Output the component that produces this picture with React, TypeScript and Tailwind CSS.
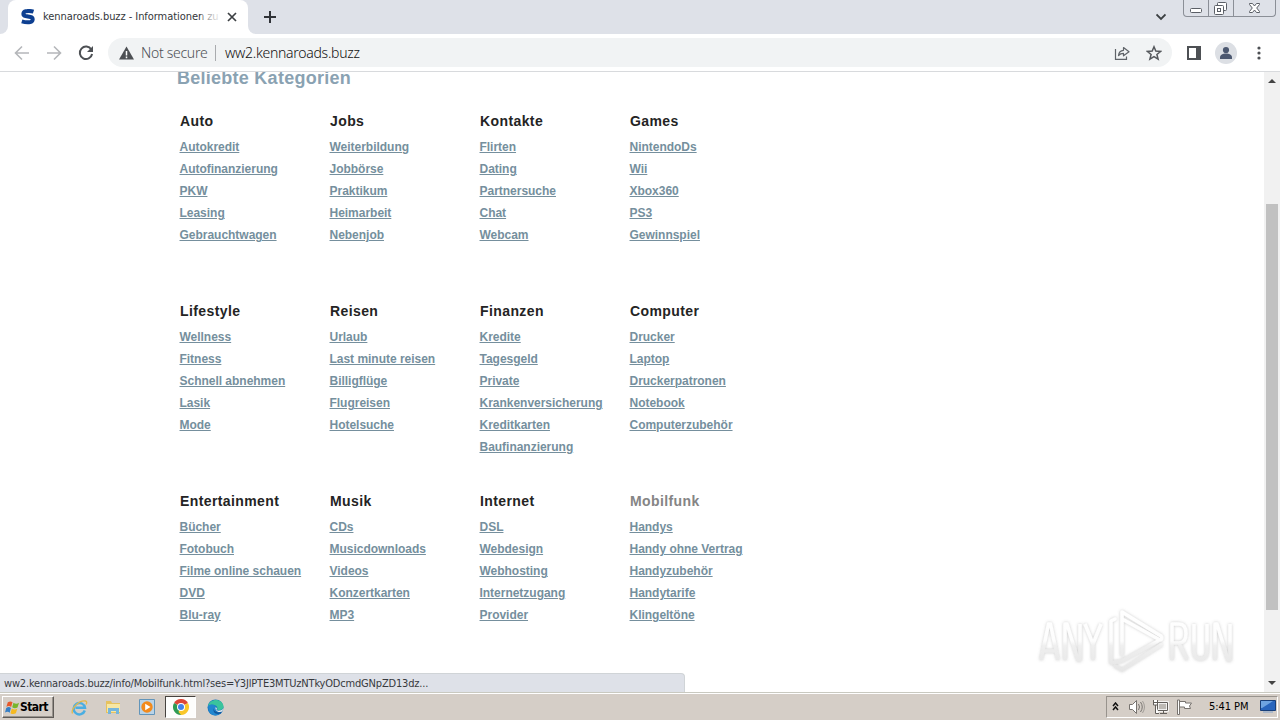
import React from "react";

type Category = { title: string; links: string[]; muted?: boolean };

const rows: Category[][] = [
  [
    { title: "Auto", links: ["Autokredit", "Autofinanzierung", "PKW", "Leasing", "Gebrauchtwagen"] },
    { title: "Jobs", links: ["Weiterbildung", "Jobbörse", "Praktikum", "Heimarbeit", "Nebenjob"] },
    { title: "Kontakte", links: ["Flirten", "Dating", "Partnersuche", "Chat", "Webcam"] },
    { title: "Games", links: ["NintendoDs", "Wii", "Xbox360", "PS3", "Gewinnspiel"] },
  ],
  [
    { title: "Lifestyle", links: ["Wellness", "Fitness", "Schnell abnehmen", "Lasik", "Mode"] },
    { title: "Reisen", links: ["Urlaub", "Last minute reisen", "Billigflüge", "Flugreisen", "Hotelsuche"] },
    { title: "Finanzen", links: ["Kredite", "Tagesgeld", "Private", "Krankenversicherung", "Kreditkarten", "Baufinanzierung"] },
    { title: "Computer", links: ["Drucker", "Laptop", "Druckerpatronen", "Notebook", "Computerzubehör"] },
  ],
  [
    { title: "Entertainment", links: ["Bücher", "Fotobuch", "Filme online schauen", "DVD", "Blu-ray"] },
    { title: "Musik", links: ["CDs", "Musicdownloads", "Videos", "Konzertkarten", "MP3"] },
    { title: "Internet", links: ["DSL", "Webdesign", "Webhosting", "Internetzugang", "Provider"] },
    { title: "Mobilfunk", muted: true, links: ["Handys", "Handy ohne Vertrag", "Handyzubehör", "Handytarife", "Klingeltöne"] },
  ],
];

function TabStrip() {
  return (
    <div className="flex h-[34px] bg-[#dee1e8]">
      <div className="flex w-[8px] items-end bg-white">
        <div className="h-full w-full rounded-br-lg bg-[#dee1e8]" />
      </div>
      <div className="flex w-[240px] items-center rounded-t-lg bg-white pl-[12px]">
        <svg width="16" height="16" viewBox="0 0 16 16" fill="none" stroke="#0d3f91" strokeWidth="4">
          <path d="M13.500 2.700C11 1.900 8 1.800 5.800 2.300 2.800 3 2.500 6.300 5.500 7l5 1c3.200.8 2.700 4.500-.3 5.100-2.800.5-5.600.1-8.400-.7" />
        </svg>
        <div className="relative ml-[7px] w-[176px] whitespace-nowrap text-[11px] tracking-[-0.060px] text-[#33363a]">
          kennaroads.buzz - Informationen zu
          <div className="absolute inset-y-0 right-0 w-[18px] bg-linear-to-r from-white/30 to-white/90" />
        </div>
        <svg className="ml-[8px]" width="10" height="10" viewBox="0 0 10 10" stroke="#3c4043" strokeWidth="1.7">
          <path d="M1 1l8 8M9 1l-8 8" />
        </svg>
      </div>
      <div className="w-[8px] bg-white">
        <div className="h-full w-full rounded-bl-lg bg-[#dee1e8]" />
      </div>
      <svg className="mt-[11px] ml-[8px]" width="12" height="12" viewBox="0 0 12 12" stroke="#303338" strokeWidth="2">
        <path d="M6 0v12M0 6h12" />
      </svg>
      <svg className="mt-[13px] ml-auto" width="10" height="8" viewBox="0 0 10 8" fill="none" stroke="#3c4043" strokeWidth="1.800">
        <path d="M.5 1.500l4.500 4.500 4.500-4.500" />
      </svg>
      <div className="mr-[4px] ml-[17px] flex h-[17px] w-[93px] rounded-b-[4px] border border-t-0 border-[#8b8f97] text-[#5b5f66]">
        <div className="w-[25px] border-r border-[#8b8f97]">
          <svg width="24" height="16" fill="none" stroke="currentColor">
            <rect x="6.500" y="8.500" width="11" height="4" rx="1" fill="#fff" />
          </svg>
        </div>
        <div className="w-[25px] border-r border-[#8b8f97]">
          <svg width="24" height="16" fill="none" stroke="currentColor">
            <rect x="8.500" y="2.500" width="9" height="8" rx="1" fill="#fff" />
            <rect x="5.500" y="5.500" width="9" height="9" rx="1" fill="#fff" />
            <rect x="8.500" y="8.500" width="3" height="3" />
          </svg>
        </div>
        <svg width="41" height="16" fill="#fff" stroke="currentColor">
          <path d="M15.500 3.500h3l2 2.500 2-2.500h3v1l-2.800 3.500 2.800 3.500v1h-3l-2-2.500-2 2.500h-3v-1l2.800-3.500-2.800-3.500z" />
        </svg>
      </div>
    </div>
  );
}

function Toolbar() {
  return (
    <div className="flex h-[38px] items-center border-b border-[#d8dadd] bg-white pl-[14px]">
      <svg width="16" height="16" viewBox="0 0 16 16" fill="none" stroke="#b5b7ba" strokeWidth="1.6">
        <path d="M15 8H2M8 1.500L1.500 8 8 14.500" />
      </svg>
      <svg className="ml-[16px]" width="16" height="16" viewBox="0 0 16 16" fill="none" stroke="#b5b7ba" strokeWidth="1.6">
        <path d="M1 8h13M8 1.500L14.500 8 8 14.500" />
      </svg>
      <svg className="ml-[16px]" width="16" height="16" viewBox="0 0 16 16" fill="none" stroke="#4d5054" strokeWidth="2">
        <path d="M13.300 4.500A6.200 6.200 0 1 0 14.100 9" />
        <path d="M15 1v6H9z" fill="#4d5054" stroke="none" />
      </svg>
      <div className="ml-[14px] flex h-[29px] w-[1064px] items-center rounded-full bg-[#f1f3f4] pl-[11px]">
        <svg width="15" height="14" viewBox="0 0 15 14">
          <path d="M7.500 0.500L15 13.500H0z" fill="#4d5054" />
          <path d="M7.500 5v4.500M7.500 10.500v1.700" stroke="#fff" strokeWidth="1.500" />
        </svg>
        <span className="ml-[7px] w-[67px] whitespace-nowrap font-['Noto_Sans',sans-serif] text-[14px] font-light tracking-[-0.280px] text-[#4d5054]">Not secure</span>
        <span className="ml-[7px] h-[16px] w-px bg-[#a9abae]" />
        <span className="ml-[9px] whitespace-nowrap font-['Noto_Sans',sans-serif] text-[14px] font-light tracking-[-0.280px] text-[#111]">ww2.kennaroads.buzz</span>
        <svg className="ml-auto" width="16" height="16" viewBox="0 0 16 16" fill="none" stroke="#5f6368" strokeWidth="1.200">
          <path d="M1.500 4v10.300h11V11.500" />
          <path d="M4.500 10.500c.4-3.500 2-5 5-5.200V2.500L15 6.800l-5.500 4V8.400c-2.200 0-3.700.6-5 2.100z" strokeLinejoin="round" />
        </svg>
        <svg className="mr-[10px] ml-[16px]" width="16" height="16" viewBox="0 0 16 16" fill="none" stroke="#55585c" strokeWidth="1.500">
          <path d="M8 1.800l1.800 4.300 4.700.4-3.600 3 1.200 4.600L8 11.600l-4.100 2.500 1.200-4.600-3.600-3 4.700-.4z" />
        </svg>
      </div>
      <svg className="ml-[15px]" width="14" height="14" viewBox="0 0 14 14">
        <path d="M0 0h14v14H0zM2 2v10h7V2z" fill="#4d5054" fillRule="evenodd" />
      </svg>
      <svg className="ml-[14px]" width="22" height="22" viewBox="0 0 22 22">
        <circle cx="11" cy="11" r="11" fill="#dcdfe4" />
        <circle cx="11" cy="8" r="3.100" fill="#4c5870" />
        <path d="M5 17v-1.500c0-2.600 3-4 6-4s6 1.400 6 4V17z" fill="#4c5870" />
      </svg>
      <svg className="ml-[20px]" width="4" height="14" fill="#4d5054">
        <circle cx="2" cy="2" r="1.600" /><circle cx="2" cy="7" r="1.600" /><circle cx="2" cy="12" r="1.600" />
      </svg>
    </div>
  );
}

function CategoryBlock({ title, links, muted }: Category) {
  return (
    <section className="h-[190px] w-[150px]">
      <h3 className={`h-[25px] pl-[1px] text-[14px] leading-[20px] font-bold tracking-[0.400px] ${muted ? "text-[#858585]" : "text-[#242424]"}`}>{title}</h3>
      <ul>
        {links.map((link) => (
          <li key={link} className="h-[22px] pl-[0.500px] text-[12px] leading-[22px] font-bold tracking-[-0.020px] whitespace-nowrap text-[#758f9d]">
            <a className="underline decoration-1 underline-offset-[1px]">{link}</a>
          </li>
        ))}
      </ul>
    </section>
  );
}

function Watermark() {
  return (
    <svg className="absolute top-[535px] left-[1032px]" width="208" height="70" viewBox="0 0 208 70">
      <defs>
        <linearGradient id="fade" gradientUnits="userSpaceOnUse" x1="0" y1="4" x2="0" y2="64">
          <stop offset="0" stopColor="#ffffff" /><stop offset=".5" stopColor="#fdfdfd" /><stop offset=".58" stopColor="#efefef" /><stop offset="1" stopColor="#e6e6e6" />
        </linearGradient>
        <filter id="halo" x="-10%" y="-20%" width="120%" height="140%">
          <feDropShadow dx="0" dy="0" stdDeviation="1.700" floodColor="#777" floodOpacity=".4" />
        </filter>
      </defs>
      <g filter="url(#halo)" fill="none" stroke="url(#fade)" strokeWidth="3.500" strokeLinejoin="round">
        <path d="M9 53L16.500 17h2L26 53M11.500 44h12" />
        <path d="M33 53V17h2l11 36h2V17" />
        <path d="M53 17l8 20v16M69 17l-8 20" />
        <path d="M140 53V17h7q7 0 7 9.500t-7 9.500h-7M147 36l8 17" />
        <path d="M162 17v27q0 8 6.500 8t6.500-8V17" />
        <path d="M183 53V17h2l11 36h2V17" />
        <path d="M83 12l-4 2v42M90 48V5l39 24q2 3-1 4L92 13M79 56l11-2 36-20M83 59l7 4 39-25" strokeLinecap="round" />
      </g>
    </svg>
  );
}

function Scrollbar() {
  return (
    <div className="ml-auto flex w-[16px] flex-col items-center bg-[#f1f1f1]">
      <svg className="mt-[7px]" width="8" height="4"><path d="M0 4h8L4 0z" fill="#444" /></svg>
      <div className="mt-[121px] h-[406px] w-[12px] bg-[#c1c1c1]" />
      <svg className="mt-auto mb-[7px]" width="8" height="4"><path d="M0 0h8L4 4z" fill="#444" /></svg>
    </div>
  );
}

function Taskbar() {
  return (
    <div className="flex h-[28px] items-center border-t border-[#c9c9c0] bg-[#d5cec7] pt-[1px] shadow-[inset_0_1px_0_#fff]">
      <div className="ml-[2px] flex h-[22px] w-[52px] items-center border border-t-white border-r-[#5e5a56] border-b-[#5e5a56] border-l-white pl-[2px] shadow-[inset_-1px_-1px_0_#98938d]">
        <svg width="15" height="15" viewBox="0 0 16 15">
          <path d="M3 2q3-2 5 0L6.500 7q-2-2-5-.3z" fill="#e8592b" />
          <path d="M9 2.500q3 2 6 0L13.300 7.500q-3 1.500-5.600-.2z" fill="#78b52c" />
          <path d="M1.300 8q3-2 5 0L5 13q-2-2-5-.3z" fill="#367fc6" />
          <path d="M7.300 8.500q3 2 5.800.2l-1.500 5q-3 1.600-5.800-.2z" fill="#f5b921" />
        </svg>
        <span className="font-['DejaVu_Sans_Condensed','DejaVu_Sans',sans-serif] text-[12px] font-bold tracking-[-0.550px] text-black">Start</span>
      </div>
      <svg className="ml-[17px]" width="17" height="17" viewBox="0 0 17 17" fill="none">
        <path d="M13.800 11.500A5.700 5.700 0 1 1 14 8.700H4.500" stroke="#4aaee2" strokeWidth="2.400" />
        <path d="M1.500 14.500C-.5 10 8 1 14.500 2c1.500.3 1.500 2 .5 3.500" stroke="#e3b84b" strokeWidth="1.300" />
      </svg>
      <svg className="ml-[17px]" width="17" height="16" viewBox="0 0 17 16">
        <path d="M1 2h5l1 2h8v10H1z" fill="#e6c25f" />
        <path d="M2 5h13v8H2z" fill="#f7e7a3" />
        <path d="M3 15V9h11v6h-3v-3H6v3z" fill="#76b6dc" />
      </svg>
      <svg className="ml-[17px]" width="16" height="16" viewBox="0 0 16 16">
        <path d="M.5.500h15v15H.5z" fill="#b9d3e7" stroke="#6295ba" />
        <circle cx="8" cy="8" r="5.700" fill="#f28a1c" />
        <path d="M6.200 4.800v6.400L11.500 8z" fill="#fff" />
      </svg>
      <div className="ml-[10px] flex h-[22px] w-[31px] items-center justify-center border border-t-[#47433f] border-r-white border-b-white border-l-[#47433f] bg-[#fdfdfc]">
        <svg width="16" height="16" viewBox="0 0 16 16">
          <path d="M8 8L1.070 4A8 8 0 0 1 14.930 4z" fill="#dd4638" />
          <path d="M8 8l6.930-4A8 8 0 0 1 8 16z" fill="#f9c72a" />
          <path d="M8 8v8A8 8 0 0 1 1.070 4z" fill="#309b55" />
          <path d="M8 8h0l-2.500 5L8 16l4-5z" fill="#f9c72a" />
          <circle cx="8" cy="8" r="4" fill="#fff" /><circle cx="8" cy="8" r="3" fill="#4282eb" />
        </svg>
      </div>
      <svg className="ml-[11px]" width="17" height="17" viewBox="0 0 17 17">
        <circle cx="8.500" cy="8.500" r="8" fill="#1976bf" />
        <path d="M1 7C3-1 15-1 16.500 7c.5 4-4 5-6.500 3.500 2-4-4-6.500-9-3.500z" fill="#3ac49c" />
        <path d="M1 7c4-3 8-1 8 2-2 2 0 5 5 4.500-4 5-11 3-12-1.500z" fill="#2186cf" />
        <path d="M7 9c-1 3 3 6 8 3.500l-1.500 2C9 16 5 13 7 9z" fill="#12549a" />
        <path d="M8.500 8.200c2.300.7 1 2.300.8 2.800 1.500 1.200 5 1 7-1.200l-1 2.800c-4 1.500-7.200-.6-6.800-4.400z" fill="#eee" />
      </svg>
      <div className="mr-[2px] ml-auto flex h-[22px] w-[172px] items-center border border-t-[#98938d] border-r-white border-b-white border-l-[#98938d]">
        <svg className="ml-[5px] mb-[2px]" width="7" height="9" fill="none" stroke="#111" strokeWidth="1.500"><path d="M1 4l2.500-3L6 4M1 8l2.500-3L6 8" /></svg>
        <svg className="ml-[9px]" width="18" height="16" viewBox="0 0 18 16" fill="none" stroke="#77736f">
          <path d="M1.500 5.500h3l4-4v13l-4-4h-3z" fill="#fff" /><path d="M10.500 5q2 3 0 6M12.500 3q3.500 5 0 10" /><path d="M14.500 2q4 6 0 12" stroke="#a19d98" />
        </svg>
        <svg className="ml-[6px]" width="17" height="16" viewBox="0 0 17 16" fill="none" stroke="#625e5a">
          <path d="M5.500 3.500h10v8h-10z" fill="#bdb9b4" stroke="#fff" strokeWidth="2.500" /><path d="M5.500 3.500h10v8h-10zM8 14.500h7M11.500 12v2" />
          <path d="M1.500 1v5h4V1M3.500 6v8.500H7M1.500 3.500h4" fill="#fff" />
        </svg>
        <svg className="ml-[7px]" width="17" height="16" viewBox="0 0 17 16" fill="#fff" stroke="#77736f">
          <path d="M1.500 1v14.500h2V1zM3.500 2.500h6v1.500h6l-2 3 1 2.500h-6V8h-5z" />
        </svg>
        <span className="ml-[16px] w-[42px] whitespace-nowrap text-[11px] tracking-[-0.050px] text-black">5:41 PM</span>
        <svg className="ml-[9px]" width="16" height="14" viewBox="0 0 16 14">
          <path d="M.5.500h15v10H.5z" fill="#2865bd" stroke="#183f79" /><path d="M1 1h12L2 8H1z" fill="#6ea4e1" /><path d="M3 11h10v2H3z" fill="#acb8c9" />
        </svg>
      </div>
    </div>
  );
}

export default function App() {
  return (
    <div className="flex h-[720px] w-[1280px] flex-col overflow-hidden bg-white font-['DejaVu_Sans_Condensed','DejaVu_Sans',sans-serif]">
      <TabStrip />
      <Toolbar />
      <div className="relative flex h-[620px] overflow-hidden">
        <main className="pl-[177px] font-['Liberation_Sans',Arial,sans-serif]">
          <h2 className="-mt-[5px] h-[44px] text-[18px] leading-[22px] font-bold tracking-[0.260px] text-[#8aa2b2]">Beliebte Kategorien</h2>
          <div className="pl-[2px]">
            {rows.map((row) => (
              <div key={row[0].title} className="flex">
                {row.map((category) => <CategoryBlock key={category.title} {...category} />)}
              </div>
            ))}
          </div>
        </main>
        <Scrollbar />
        <Watermark />
        <div className="absolute bottom-0 left-0 h-[19px] w-[685px] rounded-tr-[4px] border-t border-r border-[#d0d4d7] bg-[#dee1e8] pl-[4px] text-[11px] leading-[19px] tracking-[-0.185px] text-[#37393d]">
          ww2.kennaroads.buzz/info/Mobilfunk.html?ses=Y3JlPTE3MTUzNTkyODcmdGNpZD13dz...
        </div>
      </div>
      <Taskbar />
    </div>
  );
}
